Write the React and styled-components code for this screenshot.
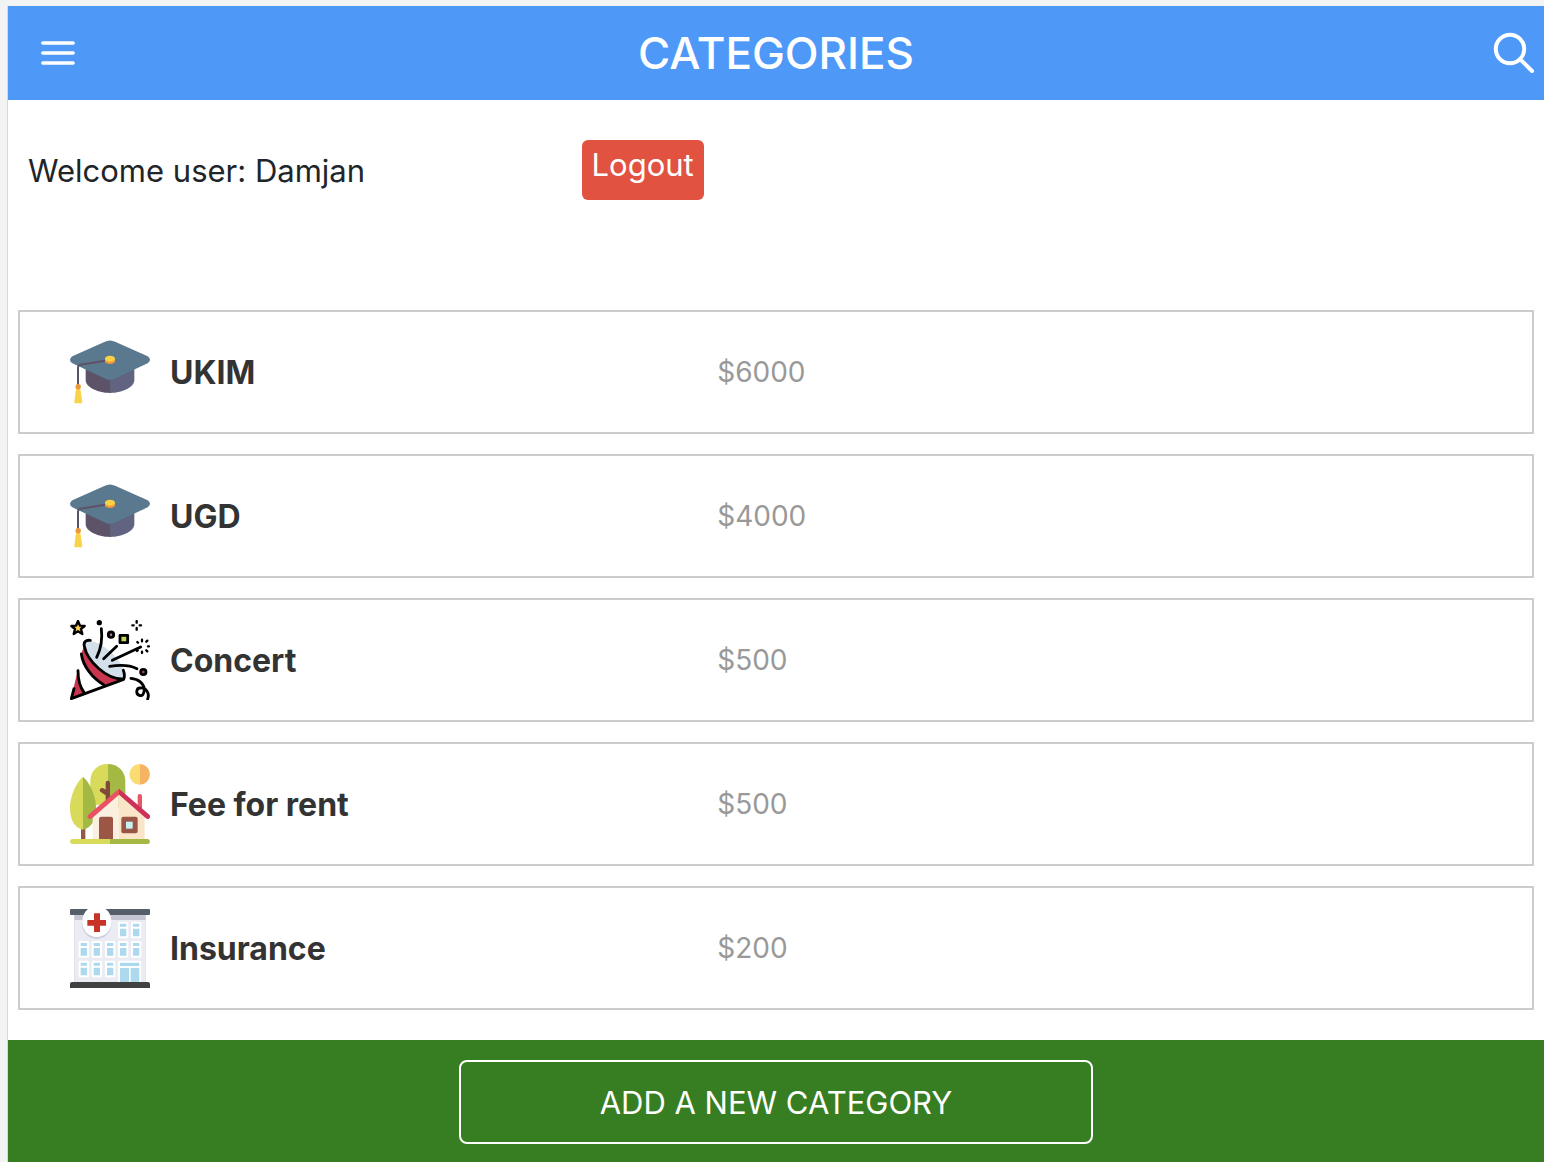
import React from "react";
import styled, { createGlobalStyle } from "styled-components";

const GlobalStyle = createGlobalStyle`
  *, *::before, *::after { box-sizing: border-box; }
  body {
    margin: 0;
    background: #f2f4f4;
    color: #212529;
    font-family: Inter, Roboto, "Liberation Sans", sans-serif;
  }
  button { font-family: inherit; cursor: pointer; }
`;

const Page = styled.div`
  display: flex;
  flex-direction: column;
  min-height: 100vh;
  padding: 6px 0 0 7px;
`;

const Screen = styled.div`
  display: flex;
  flex: 1;
  flex-direction: column;
  border-left: 1px solid #d9dadb;
  background: #fff;
`;

const Header = styled.header`
  display: grid;
  grid-template-columns: 1fr auto 1fr;
  align-items: center;
  padding: 17px 8px 17px 30px;
  background: #4e98f8;
  color: #fff;
`;

const Title = styled.h1`
  margin: 0 22px 0 0;
  font-size: 44px;
  line-height: 60px;
  font-weight: 500;
`;

const IconButton = styled.button`
  display: flex;
  justify-self: ${({ $side }) => $side};
  padding: 0;
  border: 0;
  background: transparent;
  color: inherit;
`;

const UserBar = styled.section`
  display: grid;
  grid-template-columns: 37% 1fr;
  align-items: start;
  justify-items: start;
  padding: 40px 20px 0;
`;

const Welcome = styled.p`
  margin: 0;
  font-size: 31px;
  line-height: 62px;
`;

const LogoutButton = styled.button`
  height: 60px;
  padding: 0 10px 10px;
  border: 0;
  border-radius: 6px;
  background: #e15241;
  color: #fff;
  font-size: 31px;
  line-height: 50px;
`;

const CategoryList = styled.ul`
  display: flex;
  flex: 1;
  flex-direction: column;
  gap: 20px;
  margin: 0;
  padding: 108px 10px 30px;
  list-style: none;
`;

const CategoryRow = styled.li`
  display: grid;
  grid-template-columns: 80px 2fr 3fr;
  align-items: center;
  gap: 20px;
  padding: 20px 24px 20px 50px;
  border: 2px solid #ccc;
`;

const CategoryName = styled.span`
  padding-top: 2px;
  color: #333;
  font-size: 32px;
  line-height: 40px;
  font-weight: 700;
`;

const CategoryPrice = styled.span`
  color: #999;
  font-size: 28px;
  line-height: 40px;
`;

const Footer = styled.footer`
  display: flex;
  justify-content: center;
  padding: 20px 20px 18px;
  background: #377e22;
`;

const AddButton = styled.button`
  flex: 0 1 634px;
  padding: 21px 20px 19px;
  border: 2px solid #fff;
  border-radius: 8px;
  background: transparent;
  color: #fff;
  font-size: 31px;
  line-height: 40px;
`;

const MenuIcon = () => (
  <svg width="40" height="40" viewBox="0 0 40 40" fill="none" stroke="currentColor" strokeWidth="3.6" strokeLinecap="round" aria-hidden="true">
    <path d="M4.9 10H35.1M4.9 20H35.1M4.9 30H35.1" />
  </svg>
);

const SearchIcon = () => (
  <svg width="44" height="44" viewBox="0 0 44 44" fill="none" stroke="currentColor" strokeWidth="4" strokeLinecap="round" aria-hidden="true">
    <circle cx="18" cy="18" r="14.2" />
    <path d="M28.3 28.3L40 40" />
  </svg>
);

const GraduationCap = () => (
  <svg width="80" height="80" viewBox="30 6 240 240" aria-hidden="true">
    <path d="M77 110H150V189C110 189 77 170 77 151Z" fill="#5d5369" />
    <path d="M150 110H223V151C223 170 190 189 150 189Z" fill="#606480" />
    <path d="M37 79L133 36Q150 27 167 36L263 79Q277 89 263 100L167 145Q150 155 133 145L37 100Q23 90 37 79Z" fill="#5a788e" />
    <path d="M136 92L61 104Q54 105 54 113V166" fill="none" stroke="#5d5369" strokeWidth="6" />
    <path d="M135 86V94C135 105 165 105 165 94V86Z" fill="#f19a3d" />
    <ellipse cx="150" cy="86" rx="15" ry="9" fill="#f8d247" />
    <path d="M48 177H61L67 216Q67 220 63 220H46Q43 220 43 216Z" fill="#f8d247" />
    <circle cx="54.500" cy="170" r="8" fill="#ef963d" />
  </svg>
);

const PartyPopper = () => (
  <svg width="80" height="80" viewBox="30 30 240 240" fill="none" stroke="#000" strokeWidth="8.500" strokeLinecap="round" strokeLinejoin="round" aria-hidden="true">
    <path d="M73 104C72 95 78 91 91 92C119 96 157 125 179 157C192 177 195 200 190 208C150 215 82 155 73 104Z" fill="#d3dfeb" stroke="none" />
    <path d="M73 104C76 150 140 205 188 207L133 227C104 208 68 171 64 131Z" fill="#c9344f" stroke="none" />
    <path d="M53 181C54 208 60 230 72 249L34 265Z" fill="#c9344f" stroke="none" />
    <path d="M91 91C77 89 70 97 73 109C82 156 141 207 186 207" />
    <path d="M64 132C69 170 100 207 131 224" />
    <path d="M54 182C54 209 60 231 72 247" />
    <path d="M42 236L34 266L191 208C195 198 194 191 190 181" />
    <path d="M124 56C128 88 123 116 110 142M131 146L170 109M157 151L242 111M149 169C180 164 209 165 231 176" />
    <path d="M54 33L60 47L74 48L63 57L67 72L54 64L41 72L45 57L34 48L48 47Z" fill="#f5d152" strokeWidth="7" />
    <circle cx="118" cy="38" r="8" fill="#000" stroke="none" />
    <circle cx="153" cy="74" r="8" fill="#b17bab" />
    <rect x="180" y="76" width="23" height="22" fill="#c3d655" />
    <circle cx="250" cy="186" r="8" fill="#b2466d" />
    <path d="M230 33V38M230 54V59M217 46H221M239 46H243M246 89V94M246 125V129M264 109H267M232 96L234 98M259 95L262 92M233 121L231 123M259 121L262 124" strokeWidth="7" />
    <path d="M213 205C236 207 251 220 253 237C252 253 247 259 238 256C226 252 229 233 241 234C257 232 270 249 263 267" />
  </svg>
);

const CountryHouse = () => (
  <svg width="80" height="80" viewBox="30 27 240 240" aria-hidden="true">
    <path d="M143 27C113 27 91 49 91 78V150H143Z" fill="#d8da5a" />
    <path d="M143 27C173 27 196 49 196 78V160H143Z" fill="#a4b944" />
    <path d="M137 142V121L121 110Q117 105 121 101Q125 97 130 100L137 104V84Q137 77 143 77Q150 77 150 84V142Z" fill="#80493a" />
    <path d="M63 210H76V254H63Z" fill="#955748" />
    <path d="M69 66C57 73 30 115 30 158C30 198 46 219 69 224Z" fill="#d8da5a" />
    <path d="M69 66C81 73 108 115 108 158C108 198 92 219 69 224Z" fill="#a4b944" />
    <path d="M233 170V123Q233 117 239 117Q246 117 246 123V180Z" fill="#e75566" />
    <path d="M176 110L98 178V254H176Z" fill="#fbf0df" />
    <path d="M176 110L254 178V254H176Z" fill="#fae5c9" />
    <path d="M177 101L84 180Q80 187 86 191Q91 194 97 189L177 119Z" fill="#ea5264" />
    <path d="M177 101L269 180Q273 187 267 191Q262 193 257 189L177 119Z" fill="#cd3159" />
    <path d="M117 253V191Q117 185 124 185H153Q159 185 159 191V253Z" fill="#9b5646" />
    <rect x="184" y="185" width="49" height="50" rx="6" fill="#995546" />
    <rect x="198" y="200" width="20" height="21" fill="#c4f2f4" />
    <path d="M150 252H37Q30 253 30 260Q31 267 38 267H150Z" fill="#d8da5a" />
    <path d="M150 252H263Q270 253 270 260Q269 267 263 267H150Z" fill="#a4b944" />
    <path d="M239 27A31 31 0 0 0 239 89Z" fill="#fbdc72" />
    <path d="M239 27A31 31 0 0 1 239 89Z" fill="#f5b462" />
  </svg>
);

const HOSPITAL_WINDOWS = [
  [174, 65], [213, 65],
  [56, 123], [95, 123], [135, 123], [174, 123], [213, 123],
  [56, 182], [95, 182], [135, 182],
];

const Hospital = () => (
  <svg width="80" height="80" viewBox="30 24 240 240" aria-hidden="true">
    <rect x="42" y="44" width="216" height="203" fill="#e2e3ec" />
    <rect x="45" y="44" width="211" height="203" fill="#ebebf3" />
    <rect x="43" y="44" width="214" height="16" fill="#c6c5d4" />
    <rect x="30" y="27" width="240" height="18" rx="3" fill="#565f69" />
    <ellipse cx="110" cy="72" rx="44" ry="45" fill="#cdcddd" />
    <path d="M84 27H136C148 35 154 48 154 67C154 92 135 111 110 111C86 111 67 92 67 67C67 49 73 36 84 27Z" fill="#fff" />
    <path d="M102 40H120V60H138V77H120V96H102V77H82V60H102Z" fill="#c83328" />
    {HOSPITAL_WINDOWS.map(([x, y]) => (
      <g key={`${x}-${y}`}>
        <rect x={x} y={y} width="31" height="50" rx="4" fill="#fff" />
        <path d={`M${x + 6} ${y + 6}h19v9h-19zM${x + 6} ${y + 21}h19v23h-19z`} fill="#add9ee" />
      </g>
    ))}
    <rect x="174" y="182" width="69" height="66" rx="3" fill="#fff" />
    <path d="M180 188H238V198H180ZM180 204H207V247H180ZM212 204H238V247H212Z" fill="#add9ee" />
    <path d="M30 264V252Q30 246 36 246H264Q270 246 270 252V264Z" fill="#414141" />
  </svg>
);

const CATEGORIES = [
  { name: "UKIM", price: 6000, Icon: GraduationCap },
  { name: "UGD", price: 4000, Icon: GraduationCap },
  { name: "Concert", price: 500, Icon: PartyPopper },
  { name: "Fee for rent", price: 500, Icon: CountryHouse },
  { name: "Insurance", price: 200, Icon: Hospital },
];

export default function App() {
  return (
    <>
      <GlobalStyle />
      <Page>
        <Screen>
          <Header>
            <IconButton type="button" $side="start" aria-label="Menu"><MenuIcon /></IconButton>
            <Title>CATEGORIES</Title>
            <IconButton type="button" $side="end" aria-label="Search"><SearchIcon /></IconButton>
          </Header>
          <UserBar>
            <Welcome>Welcome user: Damjan</Welcome>
            <LogoutButton type="button">Logout</LogoutButton>
          </UserBar>
          <CategoryList>
            {CATEGORIES.map(({ name, price, Icon }) => (
              <CategoryRow key={name}>
                <Icon />
                <CategoryName>{name}</CategoryName>
                <CategoryPrice>${price}</CategoryPrice>
              </CategoryRow>
            ))}
          </CategoryList>
          <Footer>
            <AddButton type="button">ADD A NEW CATEGORY</AddButton>
          </Footer>
        </Screen>
      </Page>
    </>
  );
}
